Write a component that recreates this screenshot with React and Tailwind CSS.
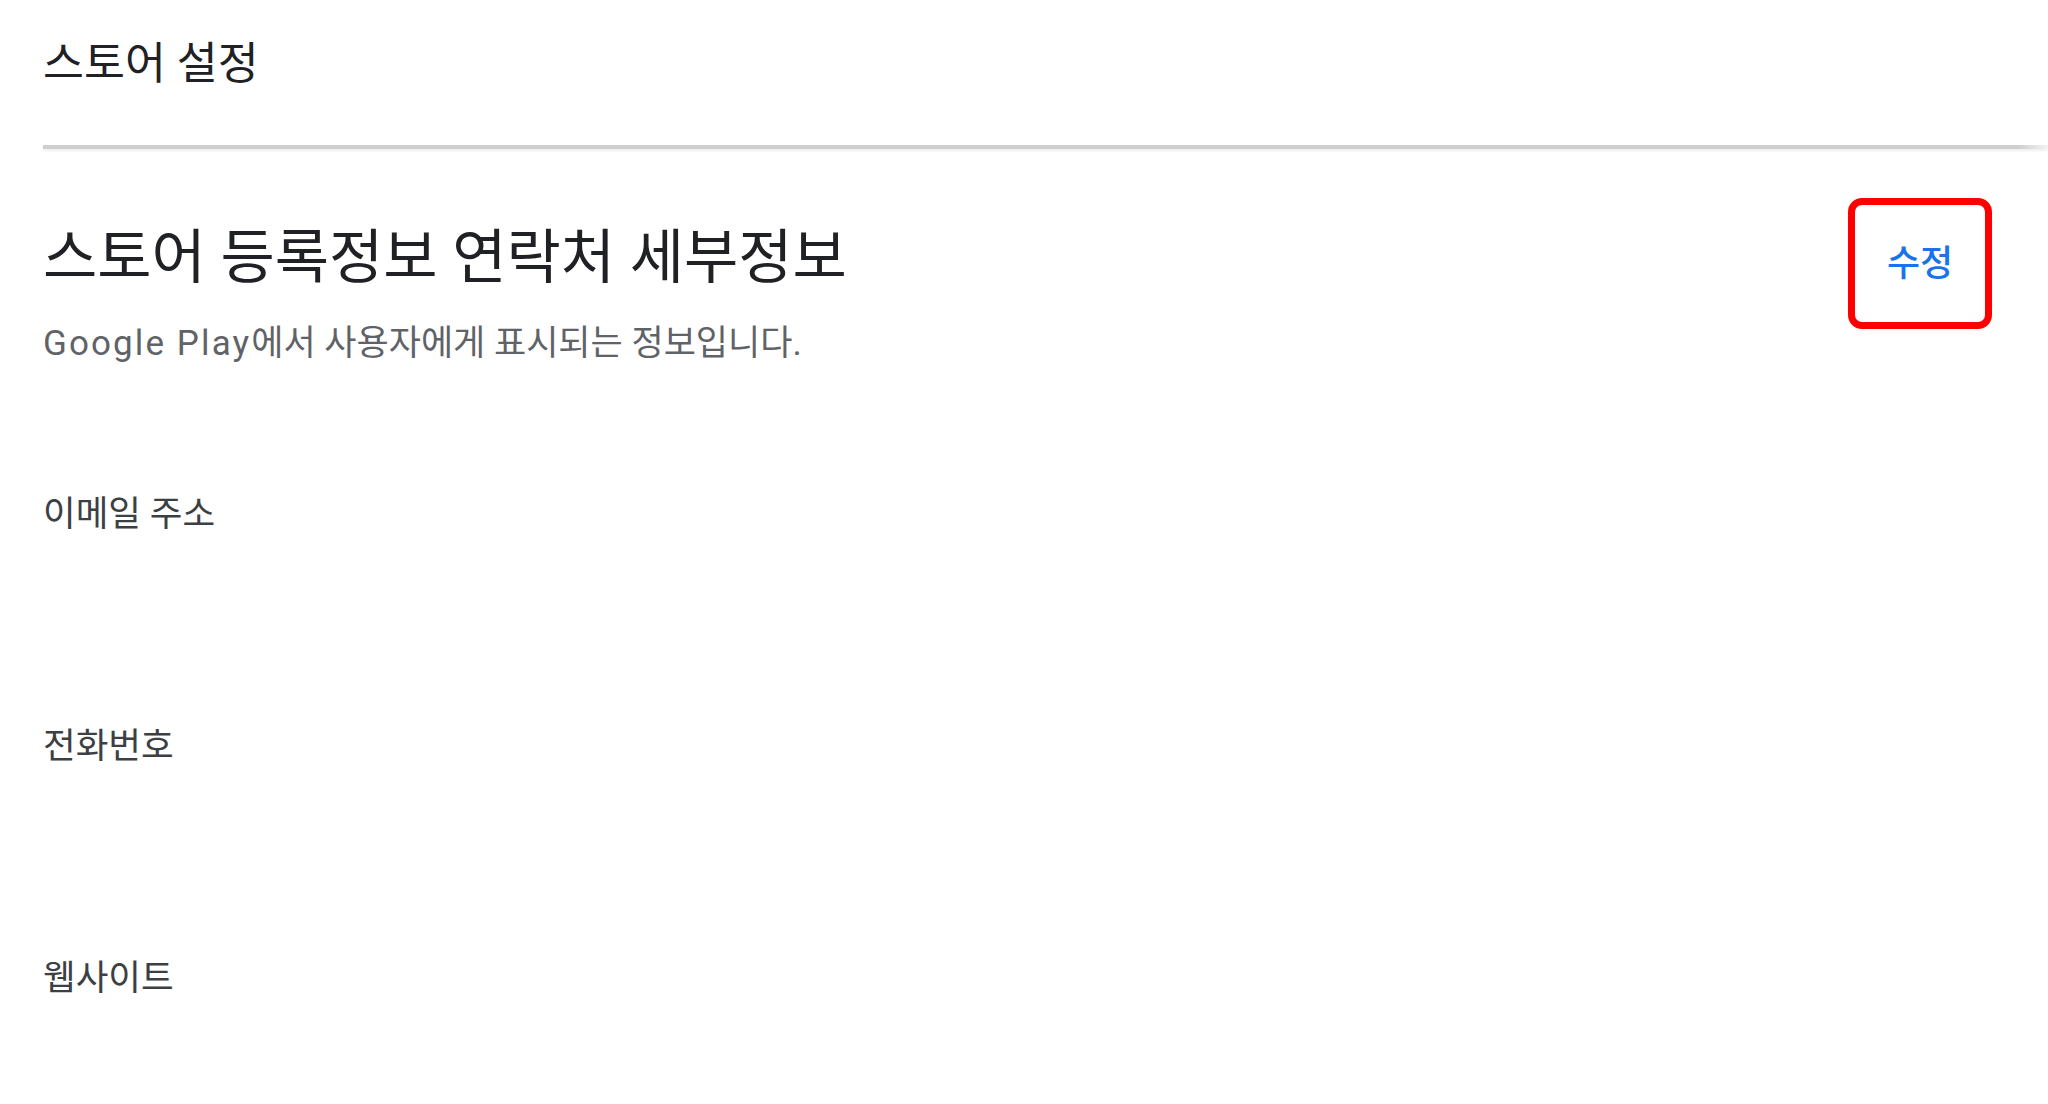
export default function App() {
  const fields = ['이메일 주소', '전화번호', '웹사이트'];

  return (
    <div className="min-h-screen bg-white pl-[43px] font-['Roboto','Noto_Sans_CJK_KR',sans-serif] text-[#202124]">
      <header className="pt-[34px]">
        <h1 className="text-[44.5px] leading-[60px]">스토어 설정</h1>
      </header>

      <div className="mt-[51px] h-[4px] bg-[linear-gradient(to_right,#cfcfcf_98.5%,#f2f2f2)] shadow-[0_2px_3px_rgba(0,0,0,0.07)]" />

      <section className="flex items-start justify-between pr-[56px]">
        <div className="mt-[77px]">
          <h2 className="text-[59px] leading-[64px]">스토어 등록정보 연락처 세부정보</h2>
          <p className="mt-[34px] text-[35px] leading-[40px] text-[#5f6368]">
            <span className="tracking-[0.06em]">Google Play</span>에서 사용자에게 표시되는 정보입니다.
          </p>
        </div>
        <button className="mt-[49px] flex h-[131px] w-[144px] items-center justify-center rounded-[14px] border-[7px] border-[#ff0000] bg-white text-[36px] font-medium text-[#1a73e8]">
          수정
        </button>
      </section>

      <dl className="mt-[130px] flex flex-col gap-[192px] pb-[100px]">
        {fields.map((f) => (
          <dt key={f} className="text-[35.5px] leading-[40px] text-[#3c4043]">
            {f}
          </dt>
        ))}
      </dl>
    </div>
  );
}
